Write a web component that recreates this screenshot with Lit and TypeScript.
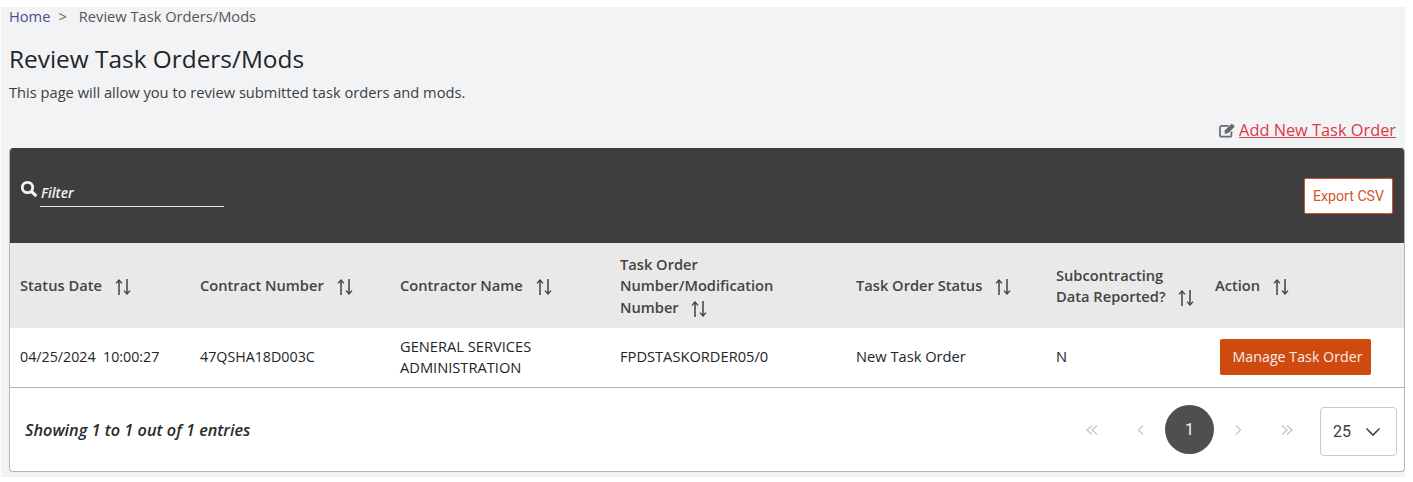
import { LitElement, html, css, svg } from "lit";
import { customElement } from "lit/decorators.js";

const sort = svg`<svg class="sort" width="18" height="18" viewBox="0 0 18 18" fill="none" stroke="#3f3f3f" stroke-width="1.5"><path d="M5 17V2.5"/><path d="M2 5.4 5 2l3 3.4" stroke-width="1.3"/><path d="M13 1v14.5"/><path d="M10 12.6 13 16l3-3.4" stroke-width="1.3"/></svg>`;

const chev = (d: string) => svg`<svg width="16" height="12" viewBox="0 0 16 12" fill="none" stroke="#c4c6c8" stroke-width="1.3"><path d="${d}"/></svg>`;

@customElement("app-root")
export class AppRoot extends LitElement {
  static styles = css`
    :host { display: block; width: 1413px; height: 482px; background: #fff; overflow: hidden; font-family: "Open Sans", sans-serif; color: #212529; }
    .page { margin: 7px 8px 0 1px; height: 470px; background: #f2f3f5; padding: 0 0 0 8px; box-sizing: border-box; }
    .crumbs { display: flex; font-size: 14.67px; line-height: 19px; color: #555; height: 19px; }
    .crumbs a { color: #4a4f8c; }
    .crumbs .sep { margin: 0 12px 0 8px; color: #666; }
    h1 { margin: 16px 0 0; font-size: 24.4px; font-weight: 400; line-height: 34px; color: #212529; height: 34px; }
    .desc { margin: 7px 0 0; font-size: 14.67px; line-height: 19px; color: #3d3d3d; height: 19px; }
    .add { display: flex; justify-content: flex-end; align-items: center; gap: 3px; margin: 18px 9px 0 0; height: 20px; }
    .add a { font-size: 16.35px; line-height: 20px; color: #d83a4a; text-decoration: underline; }
    .card { margin-top: 8px; height: 324px; box-sizing: border-box; background: #fff; border-radius: 4px; border: 1px solid #b5b5b5; border-top: 0; overflow: hidden; display: flex; flex-direction: column; }
    .bar { height: 95px; flex: none; background: #3e3e3e; display: flex; align-items: center; justify-content: space-between; padding: 0 12px 0 11px; margin: 0 -1px; }
    .filter { display: flex; align-items: flex-end; gap: 2px; align-self: flex-end; margin-bottom: 36px; }
    .filter svg { margin-bottom: 9px; }
    .input { width: 184px; height: 27px; box-sizing: border-box; border-bottom: 1px solid #e4e4e4; color: #f4f4f4; font-style: italic; font-weight: 600; font-size: 13.8px; line-height: 26px; padding-left: 1px; }
    .export { width: 89px; height: 36px; box-sizing: border-box; background: #fff; border: 1px solid #d2562a; border-radius: 2px; color: #d2562a; font: 14.2px/34px Roboto, sans-serif; text-align: center; }
    .row { display: grid; grid-template-columns: 180px 200px 220px 236px 200px 159px 1fr; padding-left: 10px; align-items: center; }
    .head { height: 84px; padding-top: 1px; flex: none; background: #e9e9e9; font-size: 14.67px; font-weight: 600; line-height: 21.5px; color: #444; }
    .head .sort { vertical-align: -5px; margin-left: 8px; }
    .body { height: 57px; padding-bottom: 2px; flex: none; background: #fff; font-size: 14.67px; line-height: 21px; color: #212529; border-bottom: 1px solid #b5b5b5; }
    .num { font-size: 14.25px; }
    .btn { display: block; width: 151px; height: 36px; margin-left: 5px; padding-left: 4px; box-sizing: border-box; background: #cf4a0e; border-radius: 2px; color: #f6efe9; font-size: 14.25px; line-height: 35px; text-align: center; }
    .foot { flex: 1; display: flex; align-items: center; justify-content: space-between; padding: 0 7px 0 15px; }
    .count { font-style: italic; font-weight: 600; font-size: 16.3px; color: #2a2a2a; }
    .pager { display: flex; align-items: center; }
    .pg { width: 48.5px; display: flex; justify-content: center; }
    .cur { width: 49px; height: 49px; border-radius: 50%; background: #4f4f4f; color: #f0f0f0; font: 16px/49px Roboto, sans-serif; text-align: center; }
    .size { width: 77px; height: 49px; margin: 4px 0 0 9px; box-sizing: border-box; border: 1px solid #c9c9c9; border-radius: 4px; background: #fff; display: flex; align-items: center; justify-content: space-between; padding: 0 15px 0 12px; font: 16px Roboto, sans-serif; color: #3c3c3c; }
  `;

  render() {
    return html`<div class="page">
      <div class="crumbs"><a>Home</a><span class="sep">&gt;</span><span>Review Task Orders/Mods</span></div>
      <h1>Review Task Orders/Mods</h1>
      <p class="desc">This page will allow you to review submitted task orders and mods.</p>
      <div class="add">
        <svg width="17" height="15" viewBox="0 0 17 15" fill="none"><path d="M12.5 8.5V12a1.7 1.7 0 0 1-1.7 1.7H2.7A1.7 1.7 0 0 1 1 12V4.5a1.7 1.7 0 0 1 1.7-1.7h7" stroke="#666b71" stroke-width="1.7"/><path d="M5.5 10.7l.4-3.4L12.9.6l3 3-6.8 6.7z" fill="#666b71"/></svg>
        <a>Add New Task Order</a>
      </div>
      <div class="card">
        <div class="bar">
          <div class="filter">
            <svg width="18" height="18" viewBox="0 0 18 18" fill="none" stroke="#f5f5f5"><circle cx="7.5" cy="7.5" r="5.2" stroke-width="2.8"/><path d="M11.5 11.5l4.8 4.6" stroke-width="3.2"/></svg>
            <div class="input">Filter</div>
          </div>
          <div class="export">Export CSV</div>
        </div>
        <div class="row head">
          <div>Status Date ${sort}</div>
          <div>Contract Number ${sort}</div>
          <div>Contractor Name ${sort}</div>
          <div>Task Order<br>Number/Modification<br>Number ${sort}</div>
          <div>Task Order Status ${sort}</div>
          <div>Subcontracting<br>Data Reported? ${sort}</div>
          <div>Action ${sort}</div>
        </div>
        <div class="row body">
          <div class="num">04/25/2024&nbsp;&nbsp;10:00:27</div>
          <div class="num">47QSHA18D003C</div>
          <div>GENERAL SERVICES<br>ADMINISTRATION</div>
          <div>FPDSTASKORDER05/0</div>
          <div>New Task Order</div>
          <div>N</div>
          <div><a class="btn">Manage Task Order</a></div>
        </div>
        <div class="foot">
          <div class="count">Showing 1 to 1 out of 1 entries</div>
          <div class="pager">
            <span class="pg">${chev("M8 1.5 3 6l5 4.5M13 1.5 8 6l5 4.5")}</span>
            <span class="pg">${chev("M10 1.5 5.5 6l4.5 4.5")}</span>
            <span class="cur">1</span>
            <span class="pg">${chev("M6 1.5 10.5 6 6 10.5")}</span>
            <span class="pg">${chev("M3 1.5 8 6l-5 4.5M8 1.5 13 6l-5 4.5")}</span>
            <div class="size"><span>25</span><svg width="16" height="10" viewBox="0 0 16 10" fill="none" stroke="#444" stroke-width="1.6"><path d="M1.5 1.5 8 8l6.5-6.5"/></svg></div>
          </div>
        </div>
      </div>
    </div>`;
  }
}
